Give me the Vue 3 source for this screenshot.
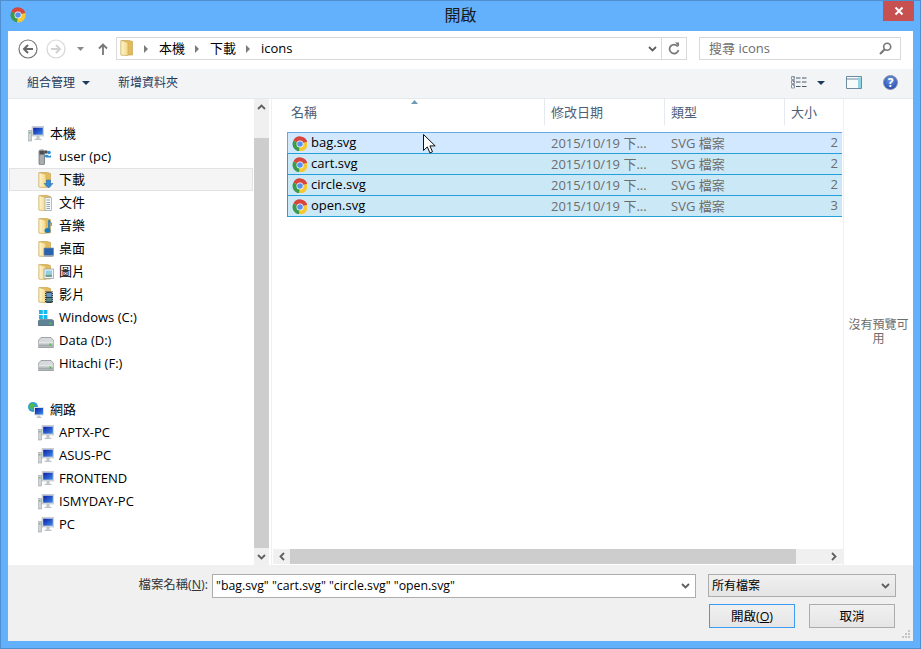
<script setup>
const computerItems = [
  { label: 'user (pc)', icon: 'i-user' },
  { label: '下載', icon: 'i-folder-down', active: true },
  { label: '文件', icon: 'i-folder-doc' },
  { label: '音樂', icon: 'i-folder-music' },
  { label: '桌面', icon: 'i-folder-desk' },
  { label: '圖片', icon: 'i-folder-pic' },
  { label: '影片', icon: 'i-folder-film' },
  { label: 'Windows (C:)', icon: 'i-win' },
  { label: 'Data (D:)', icon: 'i-disk' },
  { label: 'Hitachi (F:)', icon: 'i-disk' }
]
const networkItems = ['APTX-PC', 'ASUS-PC', 'FRONTEND', 'ISMYDAY-PC', 'PC']
const columns = [
  { label: '名稱', width: 258 },
  { label: '修改日期', width: 120 },
  { label: '類型', width: 120 },
  { label: '大小', width: 58 }
]
const files = [
  { name: 'bag.svg', size: 2, hot: true },
  { name: 'cart.svg', size: 2 },
  { name: 'circle.svg', size: 2 },
  { name: 'open.svg', size: 3 }
]
</script>

<template>
  <div class="window">
    <svg class="defs">
      <defs>
        <linearGradient id="g-folder" x1="0" y1="0" x2="1" y2="0">
          <stop offset="0" stop-color="#fff6cf" />
          <stop offset="1" stop-color="#f4d684" />
        </linearGradient>
        <linearGradient id="g-screen" x1="0" y1="0" x2="1" y2="1">
          <stop offset="0" stop-color="#0a1fa8" />
          <stop offset="1" stop-color="#3f8be6" />
        </linearGradient>
        <linearGradient id="g-disk" x1="0" y1="0" x2="0" y2="1">
          <stop offset="0" stop-color="#eef0f1" />
          <stop offset="1" stop-color="#8f9698" />
        </linearGradient>
        <radialGradient id="g-help" cx="0.5" cy="0.35" r="0.7">
          <stop offset="0" stop-color="#6f9fe8" />
          <stop offset="1" stop-color="#1c3fa8" />
        </radialGradient>
        <symbol id="i-chrome" viewBox="0 0 16 16">
          <path d="M8 8 1.4 4.4A7.5 7.5 0 0 1 15.3 6z" fill="#d8453a" />
          <path d="M8 8 15.3 6A7.5 7.5 0 0 1 7 15.4z" fill="#f6c832" />
          <path d="M8 8 7 15.4A7.5 7.5 0 0 1 1.4 4.4z" fill="#3c9a4c" />
          <circle cx="8" cy="8" r="3.500" fill="#fff" />
          <circle cx="8" cy="8" r="2.800" fill="#5b8fee" />
        </symbol>
        <symbol id="i-folder" viewBox="0 0 16 16">
          <path d="M1 .5h8l3.500 1V15H1z" fill="#e3bb5d" stroke="#c39c45" stroke-width=".6" />
          <path d="M1 .5 8 2.500v13.200L1 15z" fill="url(#g-folder)" stroke="#cfad5c" stroke-width=".6" />
        </symbol>
        <symbol id="i-folder-down" viewBox="0 0 16 16">
          <use href="#i-folder" width="16" height="16" />
          <path d="M8.500 8h4v3.500h2.500L10.500 16 6 11.500h2.500z" fill="#2f8ad8" stroke="#1f6cb6" stroke-width=".5" />
        </symbol>
        <symbol id="i-folder-doc" viewBox="0 0 16 16">
          <use href="#i-folder" width="16" height="16" />
          <path d="M7 2.500h6.500v13H7z" fill="#f7f8f9" stroke="#9aa3aa" stroke-width=".7" />
          <path d="M8.500 5h3.500M8.500 7.500h3.500M8.500 9.500h3.500M8.500 11.500h3.500M8.500 13.500h3.500" stroke="#8fa3b5" />
        </symbol>
        <symbol id="i-folder-music" viewBox="0 0 16 16">
          <use href="#i-folder" width="16" height="16" />
          <path d="M11 2v9.500" stroke="#1d7cc6" stroke-width="1.600" />
          <ellipse cx="9.500" cy="12.500" rx="3" ry="2.500" fill="#1d7cc6" />
          <path d="M11 3c2 1 3 2.500 2 5" stroke="#1d7cc6" fill="none" />
        </symbol>
        <symbol id="i-folder-desk" viewBox="0 0 16 16">
          <use href="#i-folder" width="16" height="16" />
          <path d="M6 7h9.500v7.500H6z" fill="#2a63ad" stroke="#7c8b99" stroke-width=".7" />
          <path d="M6 14.500h9.500V16H6z" fill="#aab3bb" />
        </symbol>
        <symbol id="i-folder-pic" viewBox="0 0 16 16">
          <use href="#i-folder" width="16" height="16" />
          <path d="M6 5h9.500v9.500H6z" fill="#f3f5f6" stroke="#8e979e" stroke-width=".7" />
          <path d="M7.500 6.500h6.500v4H7.500z" fill="#8fd0e6" />
          <path d="M7.500 10.500h6.500v2.500H7.500z" fill="#6ba38c" />
        </symbol>
        <symbol id="i-folder-film" viewBox="0 0 16 16">
          <use href="#i-folder" width="16" height="16" />
          <path d="M7 4.500h8V16H7z" fill="#333a42" />
          <path d="M8.500 6h5v4h-5z" fill="#5e96c4" />
          <path d="M8.500 11h5v3.500h-5z" fill="#4f8a8b" />
          <path d="M7.700 5v11M14.300 5v11" stroke="#d5dade" stroke-dasharray="1 1" />
        </symbol>
        <symbol id="i-pc" viewBox="0 0 16 16">
          <path d="M0 4.500h3.500V15H0z" fill="#d0d4d6" stroke="#8a9094" stroke-width=".5" />
          <path d="M1 6h1.500v1.500H1z" fill="#5ac36a" />
          <path d="M4 .5h12v9.500H4z" fill="#dde0e2" stroke="#a5abb0" stroke-width=".5" />
          <path d="M5.200 1.700h9.600v7H5.200z" fill="url(#g-screen)" />
          <path d="M8.500 10h3v2.700h-3zM6.500 12.700h7V14h-7z" fill="#c0c5c8" />
        </symbol>
        <symbol id="i-user" viewBox="0 0 16 16">
          <rect x="1" y="1" width="5.500" height="15" rx="1.500" fill="#a9adb0" stroke="#5f6468" stroke-width=".7" />
          <path d="M1.500 2h4.500v3.500H1.500z" fill="#4b5054" />
          <circle cx="8" cy="3" r="1.800" fill="#4b5054" />
          <path d="M6.500 7.500c0-2 3-2 4-1s2 .5 2.500-1v3H8z" fill="#2b8fd8" />
          <circle cx="11" cy="3.500" r="1.800" fill="#2b8fd8" />
        </symbol>
        <symbol id="i-disk" viewBox="0 0 16 16">
          <path d="M3 4.500h10L16 8v5.500a1 1 0 0 1-1 1H1a1 1 0 0 1-1-1V8z" fill="#d7dadc" stroke="#6d7376" stroke-width=".6" />
          <path d="M1 9h14v4.500H1z" fill="url(#g-disk)" />
          <path d="M11.500 10.500h1.800v2.200h-1.800z" fill="#4fc34f" />
        </symbol>
        <symbol id="i-win" viewBox="0 0 16 16">
          <path d="M1 0h3.800v4H1zM5.600 0h3.800v4H5.600zM1 5h3.800v4H1zM5.600 5h3.800v4H5.600z" fill="#17b7f0" />
          <path d="M2 9.500h12l2 1.500v4a1 1 0 0 1-1 1H1a1 1 0 0 1-1-1v-4z" fill="#5f8296" stroke="#55636b" stroke-width=".5" />
          <path d="M11.500 12.500h1.800v2h-1.800z" fill="#4fc34f" />
        </symbol>
        <symbol id="i-net" viewBox="0 0 16 16">
          <circle cx="5" cy="5" r="5" fill="#2f9fd6" />
          <path d="M1.500 2.500 5 1l2 2-2 2.500-1 2.500L1.500 6zM7 6l2-1v3H7z" fill="#55b848" />
          <path d="M6 5h10v8.500H6z" fill="#dde0e2" />
          <path d="M7 6h8v6.500H7z" fill="url(#g-screen)" />
          <path d="M9.800 13.500h2.400v1.300H9.800zM8.500 14.800h5V16h-5z" fill="#c0c5c8" />
        </symbol>
        <symbol id="i-chev" viewBox="0 0 9 6">
          <path d="M1 1l3.500 3.500L8 1" fill="none" stroke="#5f5f5f" stroke-width="1.800" />
        </symbol>
      </defs>
    </svg>

    <div class="titlebar">
      <svg class="title-icon"><use href="#i-chrome" width="16" height="16" /></svg>
      <div class="title">開啟</div>
      <div class="close">
        <svg width="10" height="10" viewBox="0 0 10 10"><path d="M1.500 1.500l7 7M8.500 1.500l-7 7" stroke="#fff" stroke-width="2" /></svg>
      </div>
    </div>

    <div class="client">
      <div class="navbar">
        <svg class="nav-btn" width="20" height="20" viewBox="0 0 20 20">
          <circle cx="10" cy="10" r="9" fill="none" stroke="#777" stroke-width="1.200" />
          <path d="M15 10H6M10 6l-4 4 4 4" fill="none" stroke="#666" stroke-width="2" />
        </svg>
        <svg class="nav-btn fwd" width="20" height="20" viewBox="0 0 20 20">
          <circle cx="10" cy="10" r="9" fill="none" stroke="#d6d6d6" stroke-width="1.200" />
          <path d="M5 10h9M10 6l4 4-4 4" fill="none" stroke="#d2d2d2" stroke-width="2" />
        </svg>
        <svg class="nav-drop" width="7" height="4" viewBox="0 0 7 4"><path d="M0 0h7L3.500 4z" fill="#8a8a8a" /></svg>
        <svg class="nav-up" width="10" height="12" viewBox="0 0 10 12">
          <path d="M5 12V2M1 5.500l4-4 4 4" fill="none" stroke="#777" stroke-width="1.800" />
        </svg>
        <div class="address">
          <svg class="addr-folder"><use href="#i-folder" width="16" height="16" /></svg>
          <span class="crumb-arrow"></span>
          <span class="crumb">本機</span>
          <span class="crumb-arrow"></span>
          <span class="crumb">下載</span>
          <span class="crumb-arrow"></span>
          <span class="crumb">icons</span>
          <svg class="addr-chev"><use href="#i-chev" width="9" height="6" /></svg>
          <div class="refresh">
            <svg width="12" height="13" viewBox="0 0 12 13">
              <path d="M9.800 4.500A4.500 4.500 0 1 0 10.500 8" fill="none" stroke="#777" stroke-width="1.700" />
              <path d="M7 .5h4v4z" fill="#777" />
            </svg>
          </div>
        </div>
        <div class="search">
          <span>搜尋 icons</span>
          <svg width="13" height="13" viewBox="0 0 13 13">
            <circle cx="8.200" cy="4.800" r="3.500" fill="none" stroke="#777" stroke-width="1.600" />
            <path d="M5.500 7.500 1 12" stroke="#777" stroke-width="2.200" />
          </svg>
        </div>
      </div>

      <div class="toolbar">
        <div class="tool organize">組合管理<i class="tri"></i></div>
        <div class="tool">新增資料夾</div>
        <div class="tool-right">
          <svg width="16" height="13" viewBox="0 0 16 13">
            <path d="M.5.5h3v3h-3zM.5 4.500h3v3h-3zM.5 8.500h3v3.500h-3z" fill="#fff" stroke="#8a99a8" />
            <path d="M2 1.500h.5v.5H2z" stroke="#8a99a8" /><path d="M2 5.500h.5V6H2z" stroke="#d33" /><path d="M2 9.500h.5v.5H2z" stroke="#8a99a8" />
            <path d="M5 2h4.500M11 2h4.500M5 6h4.500M11 6h4.500M5 10.500h4.500M11 10.500h4.500" stroke="#4a5a6c" />
          </svg>
          <i class="tri view-tri"></i>
          <svg class="pane-icon" width="16" height="13" viewBox="0 0 16 13">
            <path d="M.5.500h15v12H.5z" fill="#f7fafb" stroke="#6c8aa0" />
            <path d="M12 1.500h3V12h-3z" fill="#8fd3e2" />
            <path d="M1 3h11" stroke="#6c8aa0" />
          </svg>
          <svg class="help-icon" width="15" height="15" viewBox="0 0 15 15">
            <circle cx="7.500" cy="7.500" r="7" fill="url(#g-help)" stroke="#8d96a8" />
            <text x="7.500" y="11.500" text-anchor="middle" class="help-q">?</text>
          </svg>
        </div>
      </div>

      <div class="main">
        <div class="sidebar">
          <div class="nav-group">
            <div class="nav-row top">
              <svg class="row-icon"><use href="#i-pc" width="16" height="16" /></svg>本機
            </div>
            <div v-for="item in computerItems" :key="item.label" class="nav-row" :class="{ active: item.active }">
              <svg class="row-icon"><use :href="'#' + item.icon" width="16" height="16" /></svg>{{ item.label }}
            </div>
          </div>
          <div class="nav-group">
            <div class="nav-row top">
              <svg class="row-icon"><use href="#i-net" width="16" height="16" /></svg>網路
            </div>
            <div v-for="name in networkItems" :key="name" class="nav-row">
              <svg class="row-icon"><use href="#i-pc" width="16" height="16" /></svg>{{ name }}
            </div>
          </div>
        </div>

        <div class="vscroll">
          <div class="sb-btn v-up"><svg width="9" height="6"><use href="#i-chev" width="9" height="6" transform="rotate(180 4.500 3)" /></svg></div>
          <div class="v-thumb"></div>
          <div class="sb-btn v-down"><svg width="9" height="6"><use href="#i-chev" width="9" height="6" /></svg></div>
        </div>

        <div class="files">
          <div class="file-head">
            <svg class="sort" width="7" height="4" viewBox="0 0 7 4"><path d="M3.500 0 7 4H0z" fill="#6d9bb5" /></svg>
            <div v-for="col in columns" :key="col.label" class="col" :style="{ width: col.width + 'px' }">{{ col.label }}</div>
          </div>
          <div class="file-list">
            <div v-for="file in files" :key="file.name" class="file-row" :class="{ hot: file.hot }">
              <div class="c-name">
                <svg class="file-icon"><use href="#i-chrome" width="16" height="16" /></svg>{{ file.name }}
              </div>
              <div class="c-date">2015/10/19 下...</div>
              <div class="c-type">SVG 檔案</div>
              <div class="c-size">{{ file.size }}</div>
            </div>
          </div>
          <div class="hscroll">
            <div class="h-btn"><svg width="6" height="9"><use href="#i-chev" width="9" height="6" transform="rotate(90 3 3)" /></svg></div>
            <div class="h-thumb"></div>
            <div class="h-end"><svg width="6" height="9"><use href="#i-chev" width="9" height="6" transform="translate(6 0) rotate(90) scale(1 -1) translate(0 -6)" /></svg></div>
          </div>
        </div>

        <div class="preview">沒有預覽可用</div>
      </div>

      <div class="footer">
        <div class="form-row">
          <label class="fname-label">檔案名稱(<u>N</u>):</label>
          <div class="fname-input">
            <span>"bag.svg" "cart.svg" "circle.svg" "open.svg"</span>
            <svg width="9" height="6"><use href="#i-chev" width="9" height="6" /></svg>
          </div>
          <div class="ftype">
            <span>所有檔案</span>
            <svg width="9" height="6"><use href="#i-chev" width="9" height="6" /></svg>
          </div>
        </div>
        <div class="actions">
          <button class="btn primary">開啟(<u>O</u>)</button>
          <button class="btn">取消</button>
        </div>
        <svg class="grip" width="8" height="8" viewBox="0 0 8 8">
          <path d="M6 0h2v2H6zM3 3h2v2H3zM6 3h2v2H6zM0 6h2v2H0zM3 6h2v2H3zM6 6h2v2H6z" fill="#c4c4c4" />
        </svg>
      </div>
    </div>

    <svg class="cursor" width="13" height="20" viewBox="0 0 13 20">
      <path d="M.5.500v16l3.800-3.600 2.600 6 2.600-1.100-2.600-5.900h5.300z" fill="#fff" stroke="#111" />
    </svg>
  </div>
</template>

<style>
html, body { margin: 0; background: #fff; }
</style>

<style scoped>
.window {
  position: relative;
  width: 921px;
  height: 649px;
  box-sizing: border-box;
  display: flex;
  flex-direction: column;
  padding: 0 7px 7px;
  background: #63b0fd;
  border: 1px solid #4f8fd0;
  font-family: "Open Sans", "Noto Sans CJK TC", sans-serif;
  font-size: 13px;
  color: #000;
  overflow: hidden;
}
.defs { display: block; width: 0; height: 0; }
.titlebar {
  height: 30px;
  flex: none;
  display: grid;
  grid-template-columns: 1fr auto 1fr;
  align-items: start;
}
.title-icon { width: 16px; height: 16px; margin: 6px 0 0 2px; }
.title { font-size: 16px; line-height: 28px; color: #1a1a1a; }
.close {
  justify-self: end;
  width: 31px;
  height: 20px;
  margin-right: -1px;
  background: #c75050;
  display: flex;
  align-items: center;
  justify-content: center;
}
.client {
  flex: 1;
  min-height: 0;
  display: flex;
  flex-direction: column;
  background: #fff;
}
.navbar {
  height: 38px;
  flex: none;
  display: flex;
  align-items: flex-start;
  padding-top: 6px;
  box-sizing: border-box;
}
.nav-btn { margin: 2px 0 0 10px; flex: none; }
.nav-btn.fwd { margin-left: 8px; }
.nav-drop { margin: 10px 0 0 11px; flex: none; }
.nav-up { margin: 6px 0 0 14px; flex: none; }
.address {
  width: 571px;
  height: 23px;
  margin-left: 8px;
  box-sizing: border-box;
  border: 1px solid #d9d9d9;
  padding-bottom: 2px;
  display: flex;
  align-items: center;
  flex: none;
}
.addr-folder { width: 16px; height: 16px; margin: 1px 0 0 3px; flex: none; }
.crumb-arrow {
  width: 0;
  height: 0;
  margin: 2px 11px 0 9px;
  border-left: 4px solid #7b7b7b;
  border-top: 4px solid transparent;
  border-bottom: 4px solid transparent;
}
.crumb-arrow:first-of-type { margin-left: 8px; }
.crumb { margin-right: 1px; }
.addr-chev { width: 9px; height: 6px; margin: 2px 4px 0 auto; }
.refresh {
  width: 24px;
  height: 21px;
  margin-bottom: -2px;
  border-left: 1px solid #d9d9d9;
  display: flex;
  align-items: center;
  justify-content: center;
}
.search {
  width: 202px;
  height: 23px;
  margin-left: 12px;
  box-sizing: border-box;
  border: 1px solid #d9d9d9;
  padding: 0 8px 2px 9px;
  display: flex;
  align-items: center;
  justify-content: space-between;
  color: #6d6d6d;
  flex: none;
}
.search svg { margin-top: 2px; }
.toolbar {
  height: 30px;
  flex: none;
  box-sizing: border-box;
  display: flex;
  align-items: center;
  background: #f3f4f6;
  border-bottom: 1px solid #e5e9ee;
  padding: 0 0 2px 19px;
  font-size: 12px;
  color: #1e395b;
}
.tool { line-height: 26px; }
.organize { display: flex; align-items: center; width: 91px; }
.tri {
  width: 0;
  height: 0;
  margin-left: 7px;
  border-top: 4px solid #1e395b;
  border-left: 4px solid transparent;
  border-right: 4px solid transparent;
}
.tool-right { margin-left: auto; display: flex; align-items: center; padding-right: 15px; }
.view-tri { margin-left: 10px; }
.pane-icon { margin-left: 21px; }
.help-icon { margin-left: 21px; }
.help-q { font-size: 12px; font-weight: 700; fill: #fff; }
.main { flex: 1; min-height: 0; display: flex; }
.sidebar {
  width: 246px;
  flex: none;
  box-sizing: border-box;
  padding: 23px 1px 0;
  display: flex;
  flex-direction: column;
  gap: 23px;
}
.nav-row {
  height: 23px;
  box-sizing: border-box;
  display: flex;
  align-items: center;
  padding: 0 0 2px 28px;
  border: 1px solid transparent;
  border-width: 0 1px;
}
.nav-row.top { padding-left: 18px; }
.nav-row.active { background: #f5f5f5; border: 1px solid #e3e3e3; padding-bottom: 2px; }
.row-icon { width: 16px; height: 16px; margin: 2px 5px 0 0; flex: none; }
.nav-row.top .row-icon { margin-right: 6px; }
.vscroll {
  width: 15px;
  flex: none;
  display: flex;
  flex-direction: column;
  background: #f0f0f0;
}
.sb-btn { height: 17px; display: flex; align-items: center; justify-content: center; flex: none; }
.v-up { height: 39px; align-items: flex-start; padding-top: 5px; box-sizing: border-box; }
.v-thumb { flex: 1; background: #cdcdcd; }
.files {
  width: 569px;
  flex: none;
  margin-left: 2px;
  padding-left: 2px;
  border-left: 1px solid #f0f0f0;
  box-sizing: content-box;
  display: flex;
  flex-direction: column;
  position: relative;
}
.file-head { height: 33px; flex: none; display: flex; padding-left: 13px; box-sizing: border-box; }
.sort { position: absolute; left: 139px; top: 1px; }
.col {
  height: 26px;
  box-sizing: border-box;
  padding: 3px 0 0 6px;
  color: #4c607a;
  border-right: 1px solid #e5eaf0;
  flex: none;
}
.col:first-of-type { padding-left: 4px; }
.col:last-of-type { border-right: none; }
.file-list { flex: 1; min-height: 0; padding: 0 1px 0 13px; }
.file-row {
  height: 22px;
  margin-bottom: -1px;
  box-sizing: border-box;
  display: flex;
  align-items: center;
  background: #cbe8f6;
  border: 1px solid #26a0da;
  border-right: none;
  padding-bottom: 2px;
  color: #6d6d6d;
}
.file-row.hot { background: #d1e8ff; border-color: #66a7e8; border-bottom-color: #26a0da; }
.c-name { width: 257px; display: flex; align-items: center; color: #000; padding-left: 4px; box-sizing: border-box; flex: none; }
.file-icon { width: 15px; height: 15px; margin: 2px 4px 0 0; flex: none; }
.c-date { width: 120px; padding-left: 6px; box-sizing: border-box; flex: none; }
.c-type { width: 120px; padding-left: 6px; box-sizing: border-box; flex: none; }
.c-size { flex: 1; text-align: right; padding-right: 4px; }
.hscroll {
  height: 15px;
  margin: 0 0 1px -1px;
  flex: none;
  display: flex;
  background: #f0f0f0;
}
.h-btn { width: 17px; display: flex; align-items: center; justify-content: center; flex: none; }
.h-thumb { width: 506px; background: #cdcdcd; flex: none; }
.h-end { flex: 1; display: flex; align-items: center; justify-content: flex-end; padding-right: 6px; }
.preview {
  flex: 1;
  box-sizing: border-box;
  padding: 0 4px;
  border-left: 1px solid #f0f0f0;
  display: flex;
  align-items: center;
  justify-content: center;
  text-align: center;
  font-size: 12px;
  line-height: 14px;
  color: #6d6d6d;
}
.footer {
  position: relative;
  height: 76px;
  flex: none;
  box-sizing: border-box;
  background: #f0f0f0;
  padding-top: 9px;
}
.form-row { display: flex; align-items: flex-start; }
.fname-label { width: 200px; text-align: right; font-size: 12.4px; line-height: 22px; color: #333; flex: none; }
.fname-input {
  width: 484px;
  height: 24px;
  margin-left: 4px;
  box-sizing: border-box;
  background: #fff;
  border: 1px solid #acacac;
  padding: 0 5px 2px 3px;
  display: flex;
  align-items: center;
  justify-content: space-between;
  font-size: 12.3px;
  flex: none;
}
.fname-input svg { margin-top: 2px; }
.ftype {
  width: 188px;
  height: 23px;
  margin-left: 12px;
  box-sizing: border-box;
  background: linear-gradient(#f0f0f0, #e5e5e5);
  border: 1px solid #acacac;
  padding: 0 5px 2px 3px;
  display: flex;
  align-items: center;
  justify-content: space-between;
  font-size: 12px;
  flex: none;
}
.ftype svg { margin-top: 2px; }
.actions { display: flex; justify-content: flex-end; gap: 14px; margin-top: 6px; padding-right: 18px; }
.btn {
  width: 86px;
  height: 24px;
  padding: 0 0 2px;
  box-sizing: border-box;
  background: linear-gradient(#f0f0f0, #e5e5e5);
  border: 1px solid #acacac;
  font-family: inherit;
  font-size: 12.5px;
  color: #000;
}
.btn.primary { border-color: #3c9bf2; }
.grip { position: absolute; right: 3px; bottom: 3px; }
.cursor { position: absolute; left: 422px; top: 133px; }
</style>
